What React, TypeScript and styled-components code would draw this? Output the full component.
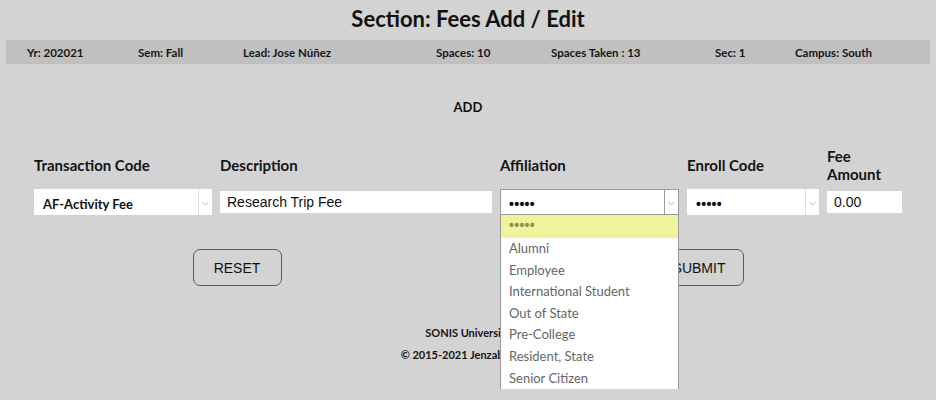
import React from "react";
import styled, { createGlobalStyle } from "styled-components";

const GlobalStyle = createGlobalStyle`
  html, body {
    margin: 0;
    padding: 0;
    background: #d3d3d3;
  }
  body {
    font-family: Lato, "Noto Sans", sans-serif;
    color: #111;
  }
  * { box-sizing: border-box; }
`;

const Page = styled.div`
  width: 936px;
  height: 400px;
  padding: 0 6px;
  overflow: hidden;
`;

const Title = styled.h1`
  margin: 0;
  height: 40px;
  line-height: 38px;
  text-align: center;
  font-size: 22px;
  font-weight: 700;
  color: #111;
`;

const InfoBar = styled.div`
  height: 24px;
  background: #c0c0c0;
  display: grid;
  grid-template-columns: 111px 105px 193px 115px 164px 80px 1fr;
  align-items: center;
  padding-left: 21px;
`;

const InfoItem = styled.span`
  font-size: 11.5px;
  font-weight: 700;
  color: #161616;
  white-space: nowrap;
`;

const SectionHeading = styled.div`
  margin-top: 33px;
  line-height: 20px;
  text-align: center;
  font-size: 13px;
  font-weight: 700;
`;

const FormGrid = styled.div`
  margin: 30px 0 0 28px;
  display: grid;
  grid-template-columns: 178px 272px 179px 132px 75px;
  grid-template-rows: 36px 26px;
  column-gap: 8px;
  row-gap: 6px;
`;

const Label = styled.div`
  align-self: center;
  font-size: 15px;
  font-weight: 700;
  line-height: 18px;
  color: #141414;
`;

const Cell = styled.div`
  position: relative;
  align-self: center;
`;

const SelectBox = styled.div<{ $open?: boolean }>`
  height: 26px;
  background: #fff;
  display: flex;
  align-items: center;
  border: ${(p) => (p.$open ? "1px solid #9a9a9a" : "none")};
`;

const SelectValue = styled.div<{ $pad: number }>`
  flex: 1;
  padding-left: ${(p) => p.$pad}px;
  padding-top: 4px;
  font-size: 13px;
  font-weight: 700;
  color: #111;
  white-space: nowrap;
  overflow: hidden;
`;

const Dots = styled.span`
  font-family: "Liberation Sans", Arial, sans-serif;
  font-size: 14px;
  font-weight: 700;
  letter-spacing: 0.3px;
`;

const ArrowArea = styled.div<{ $open?: boolean }>`
  width: 14px;
  height: 100%;
  border-left: 1px solid ${(p) => (p.$open ? "#9a9a9a" : "#dedede")};
  display: flex;
  align-items: center;
  justify-content: center;
  padding-top: 2px;
`;

const TextInput = styled.div<{ $pad: number }>`
  height: 22px;
  background: #fff;
  padding-left: ${(p) => p.$pad}px;
  font-family: "Liberation Sans", Arial, sans-serif;
  font-size: 14px;
  line-height: 22px;
  color: #111;
`;

const Dropdown = styled.div`
  position: absolute;
  top: 26px;
  left: 0;
  width: 179px;
  height: 174px;
  background: #fff;
  border: 1px solid #9a9a9a;
  border-top: none;
  z-index: 5;
`;

const Option = styled.div<{ $active?: boolean }>`
  height: ${(p) => (p.$active ? "23px" : "21.6px")};
  line-height: ${(p) => (p.$active ? "20px" : "21.6px")};
  padding-left: 8px;
  font-size: 13px;
  color: ${(p) => (p.$active ? "#8d9150" : "#666")};
  background: ${(p) => (p.$active ? "#eff39b" : "#fff")};
  white-space: nowrap;
`;

const ButtonRow = styled.div`
  margin-top: 34px;
  display: flex;
  justify-content: center;
  gap: 373px;
`;

const Button = styled.button`
  width: 89px;
  height: 37px;
  background: transparent;
  border: 1px solid #5a5a5a;
  border-radius: 7px;
  font-family: "Liberation Sans", Arial, sans-serif;
  font-size: 14px;
  color: #111;
  padding: 0;
`;

const Footer = styled.div`
  margin-top: 36px;
  text-align: center;
  font-size: 11px;
  font-weight: 700;
  line-height: 22px;
  color: #151515;
`;

const Chevron = () => (
  <svg width="7" height="5" viewBox="0 0 7 5">
    <path d="M0.5 1 L3.5 4 L6.5 1" fill="none" stroke="#b0b0b0" strokeWidth="1" />
  </svg>
);

const info = [
  "Yr: 202021",
  "Sem: Fall",
  "Lead: Jose Núñez",
  "Spaces: 10",
  "Spaces Taken : 13",
  "Sec: 1",
  "Campus: South",
];

const affiliations = [
  "Alumni",
  "Employee",
  "International Student",
  "Out of State",
  "Pre-College",
  "Resident, State",
  "Senior Citizen",
];

export default function App() {
  return (
    <>
      <GlobalStyle />
      <Page>
        <Title>Section: Fees Add / Edit</Title>
        <InfoBar>
          {info.map((t) => (
            <InfoItem key={t}>{t}</InfoItem>
          ))}
        </InfoBar>
        <SectionHeading>ADD</SectionHeading>
        <FormGrid>
          <Label>Transaction Code</Label>
          <Label>Description</Label>
          <Label>Affiliation</Label>
          <Label>Enroll Code</Label>
          <Label>Fee Amount</Label>

          <Cell>
            <SelectBox>
              <SelectValue $pad={9}>AF-Activity Fee</SelectValue>
              <ArrowArea>
                <Chevron />
              </ArrowArea>
            </SelectBox>
          </Cell>
          <Cell>
            <TextInput $pad={7}>Research Trip Fee</TextInput>
          </Cell>
          <Cell>
            <SelectBox $open>
              <SelectValue $pad={8}>
                <Dots>•••••</Dots>
              </SelectValue>
              <ArrowArea $open>
                <Chevron />
              </ArrowArea>
            </SelectBox>
            <Dropdown>
              <Option $active>
                <Dots>•••••</Dots>
              </Option>
              {affiliations.map((a) => (
                <Option key={a}>{a}</Option>
              ))}
            </Dropdown>
          </Cell>
          <Cell>
            <SelectBox>
              <SelectValue $pad={9}>
                <Dots>•••••</Dots>
              </SelectValue>
              <ArrowArea>
                <Chevron />
              </ArrowArea>
            </SelectBox>
          </Cell>
          <Cell>
            <TextInput $pad={7}>0.00</TextInput>
          </Cell>
        </FormGrid>
        <ButtonRow>
          <Button>RESET</Button>
          <Button>SUBMIT</Button>
        </ButtonRow>
        <Footer>
          <div>SONIS University</div>
          <div>© 2015-2021 Jenzabar, Inc.</div>
        </Footer>
      </Page>
    </>
  );
}
